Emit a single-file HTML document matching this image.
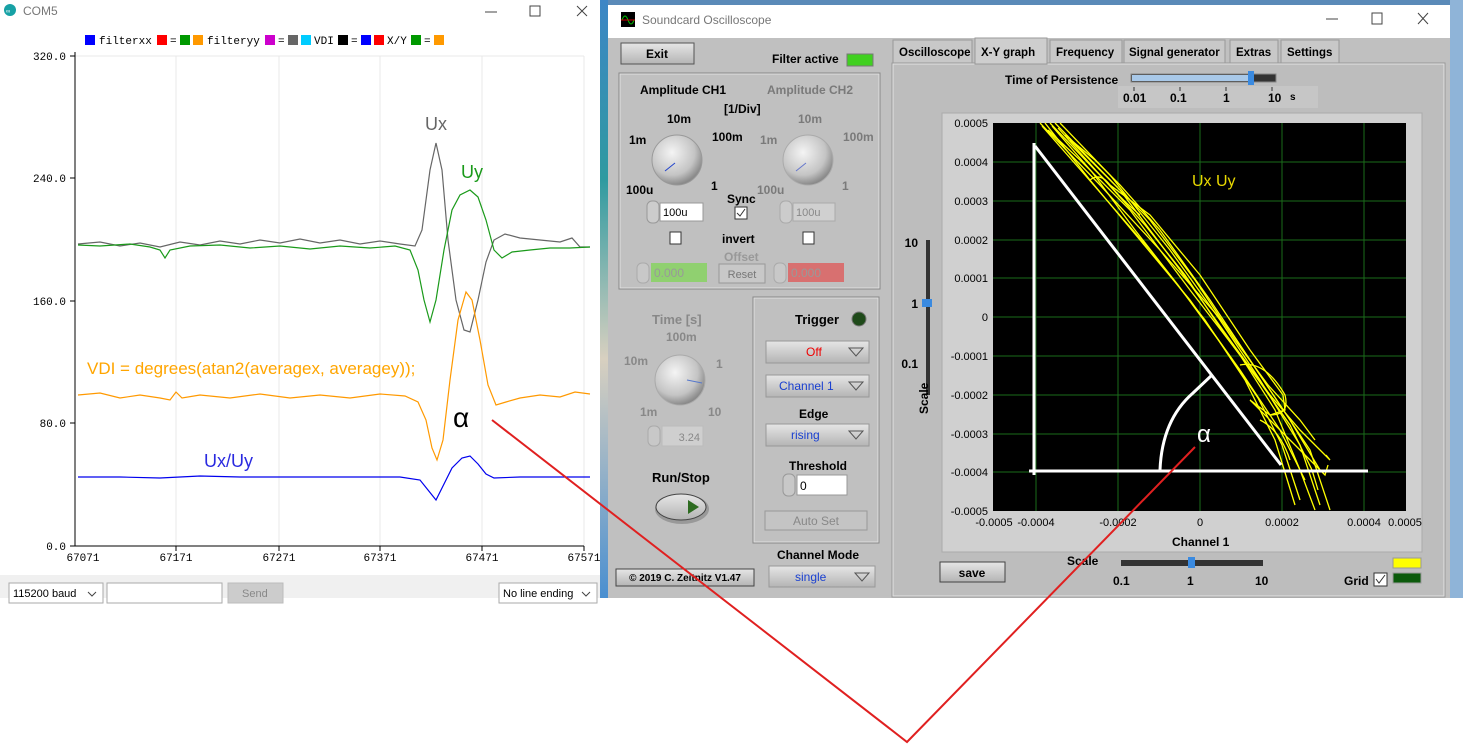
<!DOCTYPE html>
<html><head><meta charset="utf-8"><style>
html,body{margin:0;padding:0;background:#fff;width:1463px;height:749px;overflow:hidden}
svg{display:block}
text{font-family:"Liberation Sans",sans-serif}
.m{font-family:"Liberation Mono",monospace;font-size:11px;fill:#000}
.b{font-weight:bold;font-size:12px;fill:#000}
.g{font-weight:bold;font-size:12px;fill:#7a7a7a}
</style></head><body>
<svg width="1463" height="749" viewBox="0 0 1463 749" xmlns="http://www.w3.org/2000/svg">
<defs>
<radialGradient id="kn" cx="40%" cy="35%" r="65%"><stop offset="0" stop-color="#f4f4f4"/><stop offset="0.7" stop-color="#c4c4c4"/><stop offset="1" stop-color="#8a8a8a"/></radialGradient>
<linearGradient id="btn" x1="0" y1="0" x2="0" y2="1"><stop offset="0" stop-color="#e6e6e6"/><stop offset="1" stop-color="#b4b4b4"/></linearGradient>
<linearGradient id="desk" x1="0" y1="0" x2="0" y2="1"><stop offset="0" stop-color="#3d86c6"/><stop offset="0.3" stop-color="#2f9aa0"/><stop offset="0.6" stop-color="#d8d0c0"/><stop offset="1" stop-color="#4a8fd0"/></linearGradient>
</defs>
<rect x="598" y="0" width="865" height="598" fill="url(#desk)"/>
<rect x="608" y="0" width="855" height="6" fill="#5a8ab8"/>
<rect x="1450" y="0" width="13" height="598" fill="#8fb4d8"/>
<!-- LEFT WINDOW -->
<rect x="0" y="0" width="600" height="598" fill="#fff"/>
<circle cx="10" cy="10" r="6" fill="#17a1a5"/><text x="6" y="13" font-size="6" fill="#fff">∞</text>
<text x="23" y="15" font-size="12" fill="#777">COM5</text>
<line x1="485" y1="12" x2="497" y2="12" stroke="#444"/>
<rect x="530" y="6" width="10" height="10" fill="none" stroke="#444"/>
<path d="M577 6 L587 16 M587 6 L577 16" stroke="#444"/>
<g>
<rect x="85" y="35" width="10" height="10" fill="#00f"/><text x="99" y="44" class="m">filterxx</text>
<rect x="157" y="35" width="10" height="10" fill="#f00"/><text x="170" y="44" class="m">=</text>
<rect x="180" y="35" width="10" height="10" fill="#090"/><rect x="193" y="35" width="10" height="10" fill="#f90"/>
<text x="207" y="44" class="m">filteryy</text>
<rect x="265" y="35" width="10" height="10" fill="#c0c"/><text x="278" y="44" class="m">=</text>
<rect x="288" y="35" width="10" height="10" fill="#666"/><rect x="301" y="35" width="10" height="10" fill="#0cf"/>
<text x="314" y="44" class="m">VDI</text>
<rect x="338" y="35" width="10" height="10" fill="#000"/><text x="351" y="44" class="m">=</text>
<rect x="361" y="35" width="10" height="10" fill="#00f"/><rect x="374" y="35" width="10" height="10" fill="#f00"/>
<text x="387" y="44" class="m">X/Y</text>
<rect x="411" y="35" width="10" height="10" fill="#090"/><text x="424" y="44" class="m">=</text>
<rect x="434" y="35" width="10" height="10" fill="#f90"/>
</g>
<g stroke="#e8e8e8">
<line x1="176" y1="56" x2="176" y2="546"/><line x1="279" y1="56" x2="279" y2="546"/><line x1="380" y1="56" x2="380" y2="546"/><line x1="482" y1="56" x2="482" y2="546"/><line x1="584" y1="56" x2="584" y2="546"/>
<line x1="75" y1="56" x2="584" y2="56"/>
</g>
<g stroke="#000">
<line x1="75" y1="52" x2="75" y2="546"/><line x1="70" y1="546" x2="584" y2="546"/>
<line x1="70" y1="56" x2="75" y2="56"/><line x1="70" y1="178" x2="75" y2="178"/><line x1="70" y1="301" x2="75" y2="301"/><line x1="70" y1="423" x2="75" y2="423"/>
<line x1="176" y1="546" x2="176" y2="551"/><line x1="279" y1="546" x2="279" y2="551"/><line x1="380" y1="546" x2="380" y2="551"/><line x1="482" y1="546" x2="482" y2="551"/><line x1="584" y1="546" x2="584" y2="551"/>
</g>
<g text-anchor="end"><text x="66" y="60" class="m">320.0</text><text x="66" y="182" class="m">240.0</text><text x="66" y="305" class="m">160.0</text><text x="66" y="427" class="m">80.0</text><text x="66" y="550" class="m">0.0</text></g>
<g text-anchor="middle"><text x="83" y="561" class="m">67071</text><text x="176" y="561" class="m">67171</text><text x="279" y="561" class="m">67271</text><text x="380" y="561" class="m">67371</text><text x="482" y="561" class="m">67471</text><text x="584" y="561" class="m">67571</text></g>
<polyline fill="none" stroke="#666" stroke-width="1.2" points="78,244 100,242 120,246 140,243 160,247 180,242 200,245 220,241 240,244 260,240 280,243 300,239 320,243 340,240 360,244 380,241 400,244 415,246 422,230 430,170 436,143 442,170 448,240 456,300 464,330 470,332 478,300 486,262 494,240 505,234 520,238 540,240 560,242 572,238 580,247 590,247"/>
<polyline fill="none" stroke="#1a9a1a" stroke-width="1.2" points="78,245 100,246 130,244 150,247 160,250 165,258 170,250 190,246 220,245 250,248 280,246 310,249 340,246 370,248 395,246 410,250 418,270 424,300 430,322 436,300 444,250 452,210 460,195 470,190 478,197 486,220 494,250 502,258 512,252 530,250 550,248 570,248 590,247"/>
<polyline fill="none" stroke="#ff9900" stroke-width="1.2" points="78,395 100,393 120,398 140,395 160,398 170,400 176,392 182,398 200,395 230,398 260,394 290,398 320,395 350,398 380,394 405,396 418,402 426,420 432,448 437,460 443,440 450,380 458,320 466,292 472,300 480,340 488,385 496,405 506,402 520,398 540,395 560,397 575,392 590,394"/>
<polyline fill="none" stroke="#0000ee" stroke-width="1.2" points="78,477 120,477 160,478 200,476 240,477 280,477 320,477 360,477 400,477 420,480 428,490 436,500 444,484 452,468 462,458 470,456 478,464 486,474 494,478 520,477 560,477 590,477"/>
<text x="425" y="130" font-size="18" fill="#666">Ux</text>
<text x="461" y="178" font-size="18" fill="#1a9a1a">Uy</text>
<text x="87" y="374" font-size="17" fill="#ffa500">VDI = degrees(atan2(averagex, averagey));</text>
<text x="453" y="427" font-size="28" fill="#000">α</text>
<text x="204" y="467" font-size="18" fill="#2a2ae0">Ux/Uy</text>
<rect x="0" y="575" width="600" height="23" fill="#f0f0f0"/>
<rect x="9" y="583" width="94" height="20" fill="#fff" stroke="#aaa"/><text x="13" y="597" font-size="11" fill="#000">115200 baud</text><path d="M88 592 l4 4 l4 -4" stroke="#444" fill="none"/>
<rect x="107" y="583" width="115" height="20" fill="#fff" stroke="#aaa"/>
<rect x="228" y="583" width="55" height="20" fill="#ccc" stroke="#bbb"/><text x="242" y="597" font-size="11" fill="#888">Send</text>
<rect x="499" y="583" width="98" height="20" fill="#fff" stroke="#aaa"/><text x="503" y="597" font-size="11" fill="#000">No line ending</text><path d="M582 592 l4 4 l4 -4" stroke="#444" fill="none"/>
<!-- RIGHT WINDOW -->
<rect x="608" y="5" width="842" height="593" fill="#c0c0c0"/>
<rect x="608" y="5" width="842" height="33" fill="#fff"/>
<rect x="621" y="12" width="14" height="15" fill="#000"/><path d="M622 20 q3 -8 6 0 t6 0" stroke="#0c0" fill="none"/><line x1="621" y1="20" x2="635" y2="20" stroke="#c00"/>
<text x="642" y="24" font-size="12" fill="#777">Soundcard Oscilloscope</text>
<line x1="1326" y1="19" x2="1338" y2="19" stroke="#444"/>
<rect x="1372" y="13" width="10" height="11" fill="none" stroke="#444"/>
<path d="M1418 13 L1428 24 M1428 13 L1418 24" stroke="#444"/>
<rect x="621" y="43" width="73" height="21" fill="url(#btn)" stroke="#555"/><text x="657" y="58" class="b" text-anchor="middle">Exit</text>
<text x="772" y="63" class="b">Filter active</text>
<rect x="847" y="54" width="26" height="12" fill="#40d020" stroke="#777"/>
<rect x="619" y="73" width="261" height="216" fill="none" stroke="#888"/><rect x="620" y="74" width="259" height="214" fill="none" stroke="#e0e0e0"/>
<text x="640" y="94" class="b">Amplitude CH1</text><text x="767" y="94" class="g">Amplitude CH2</text>
<text x="724" y="113" class="b">[1/Div]</text>
<g>
<circle cx="677" cy="160" r="25" fill="url(#kn)" stroke="#999"/><line x1="665" y1="171" x2="675" y2="163" stroke="#2244cc"/>
<text x="667" y="123" class="b">10m</text><text x="629" y="144" class="b">1m</text><text x="712" y="141" class="b">100m</text><text x="626" y="194" class="b">100u</text><text x="711" y="190" class="b">1</text>
<circle cx="808" cy="160" r="25" fill="url(#kn)" stroke="#aaa"/><line x1="796" y1="171" x2="806" y2="163" stroke="#6677cc"/>
<text x="798" y="123" class="g">10m</text><text x="760" y="144" class="g">1m</text><text x="843" y="141" class="g">100m</text><text x="757" y="194" class="g">100u</text><text x="842" y="190" class="g">1</text>
</g>
<rect x="647" y="201" width="12" height="22" rx="5" fill="#ccc" stroke="#999"/>
<rect x="660" y="203" width="43" height="18" fill="#fff" stroke="#999"/><text x="663" y="216" font-size="11" fill="#000">100u</text>
<rect x="780" y="201" width="12" height="22" rx="5" fill="#ccc" stroke="#aaa"/>
<rect x="793" y="203" width="42" height="18" fill="#d0d0d0" stroke="#aaa"/><text x="796" y="216" font-size="11" fill="#888">100u</text>
<text x="727" y="203" class="b">Sync</text>
<rect x="735" y="207" width="12" height="12" fill="#fff" stroke="#333"/><path d="M737 213 l3 3 l5 -7" stroke="#333" fill="none"/>
<rect x="670" y="232" width="11" height="12" fill="#fff" stroke="#333"/><rect x="803" y="232" width="11" height="12" fill="#fff" stroke="#333"/>
<text x="722" y="243" class="b">invert</text>
<text x="724" y="261" class="g" style="fill:#999">Offset</text>
<rect x="637" y="263" width="12" height="20" rx="5" fill="#c8c8c8" stroke="#aaa"/>
<rect x="651" y="263" width="56" height="19" fill="#90d070"/><text x="654" y="277" font-size="12" fill="#999">0.000</text>
<rect x="719" y="264" width="46" height="19" fill="#c8c8c8" stroke="#999"/><text x="742" y="278" font-size="11" fill="#777" text-anchor="middle">Reset</text>
<rect x="774" y="263" width="12" height="20" rx="5" fill="#c8c8c8" stroke="#aaa"/>
<rect x="788" y="263" width="56" height="19" fill="#d87070"/><text x="791" y="277" font-size="12" fill="#999">0.000</text>
<text x="652" y="324" class="g" style="fill:#888;font-size:13px">Time [s]</text>
<text x="666" y="341" class="g" style="fill:#888">100m</text><text x="624" y="365" class="g" style="fill:#888">10m</text><text x="716" y="368" class="g" style="fill:#888">1</text><text x="640" y="416" class="g" style="fill:#888">1m</text><text x="708" y="416" class="g" style="fill:#888">10</text>
<circle cx="680" cy="380" r="25" fill="url(#kn)" stroke="#aaa"/><line x1="687" y1="380" x2="702" y2="383" stroke="#5577cc"/>
<rect x="648" y="426" width="12" height="20" rx="5" fill="#c8c8c8" stroke="#aaa"/>
<rect x="662" y="426" width="41" height="20" fill="#cfcfcf" stroke="#bbb"/><text x="700" y="441" font-size="11" fill="#888" text-anchor="end">3.24</text>
<text x="652" y="482" class="b" style="font-size:13px">Run/Stop</text>
<ellipse cx="682" cy="509" rx="27" ry="15" fill="#999"/><ellipse cx="681" cy="507" rx="25" ry="13" fill="url(#btn)" stroke="#444"/>
<path d="M688 500 L699 507 L688 514 Z" fill="#2d6b20"/>
<rect x="753" y="297" width="126" height="246" fill="none" stroke="#888"/><rect x="754" y="298" width="124" height="244" fill="none" stroke="#e0e0e0"/>
<text x="795" y="324" class="b" style="font-size:13px">Trigger</text>
<circle cx="859" cy="319" r="7" fill="#1f4a1a" stroke="#777"/>
<g font-size="12">
<rect x="766" y="341" width="103" height="22" fill="url(#btn)" stroke="#999"/><text x="806" y="356" fill="#e00">Off</text><path d="M849 348 l7 8 l7 -8 z" fill="none" stroke="#555"/>
<rect x="766" y="375" width="103" height="22" fill="url(#btn)" stroke="#999"/><text x="779" y="390" fill="#1a40d0">Channel 1</text><path d="M849 382 l7 8 l7 -8 z" fill="none" stroke="#555"/>
<text x="799" y="418" class="b">Edge</text>
<rect x="766" y="424" width="103" height="22" fill="url(#btn)" stroke="#999"/><text x="791" y="439" fill="#1a40d0">rising</text><path d="M849 431 l7 8 l7 -8 z" fill="none" stroke="#555"/>
</g>
<text x="789" y="470" class="b">Threshold</text>
<rect x="783" y="474" width="12" height="22" rx="5" fill="#c8c8c8" stroke="#999"/>
<rect x="797" y="475" width="50" height="20" fill="#fff" stroke="#999"/><text x="800" y="490" font-size="12" fill="#000">0</text>
<rect x="765" y="511" width="102" height="19" fill="#c4c4c4" stroke="#999"/><text x="816" y="525" font-size="12" fill="#888" text-anchor="middle">Auto Set</text>
<text x="777" y="559" class="b">Channel Mode</text>
<rect x="769" y="566" width="106" height="21" fill="url(#btn)" stroke="#999"/><text x="795" y="581" font-size="12" fill="#1a40d0">single</text><path d="M855 573 l7 8 l7 -8 z" fill="none" stroke="#555"/>
<rect x="616" y="569" width="138" height="17" fill="url(#btn)" stroke="#444"/><text x="685" y="581" font-size="10" font-weight="bold" fill="#000" text-anchor="middle">© 2019  C. Zeitnitz V1.47</text>
<rect x="892" y="63" width="553" height="534" fill="#bdbdbd" stroke="#999"/>
<rect x="893" y="64" width="551" height="532" fill="none" stroke="#e2e2e2"/>
<g font-size="11.5" font-weight="bold">
<rect x="893" y="40" width="79" height="23" fill="#c8c8c8" stroke="#999"/><text x="899" y="56">Oscilloscope</text>
<rect x="975" y="38" width="72" height="26" fill="#cecece" stroke="#999"/><text x="981" y="56">X-Y graph</text>
<rect x="1050" y="40" width="72" height="23" fill="#c8c8c8" stroke="#999"/><text x="1056" y="56">Frequency</text>
<rect x="1124" y="40" width="101" height="23" fill="#c8c8c8" stroke="#999"/><text x="1129" y="56">Signal generator</text>
<rect x="1230" y="40" width="48" height="23" fill="#c8c8c8" stroke="#999"/><text x="1236" y="56">Extras</text>
<rect x="1281" y="40" width="58" height="23" fill="#c8c8c8" stroke="#999"/><text x="1287" y="56">Settings</text>
</g>
<text x="1005" y="84" class="b">Time of Persistence</text>
<rect x="1118" y="86" width="200" height="22" fill="#c6c6c6"/>
<rect x="1131" y="74" width="145" height="8" fill="#333" stroke="#888"/><rect x="1132" y="75" width="118" height="6" fill="#a8c8e8"/><rect x="1248" y="71" width="6" height="14" fill="#3a8ae0"/>
<g stroke="#333"><line x1="1134" y1="87" x2="1134" y2="91"/><line x1="1180" y1="87" x2="1180" y2="91"/><line x1="1226" y1="87" x2="1226" y2="91"/><line x1="1272" y1="87" x2="1272" y2="91"/></g>
<text x="1123" y="102" class="b">0.01</text><text x="1170" y="102" class="b">0.1</text><text x="1223" y="102" class="b">1</text><text x="1268" y="102" class="b">10</text><text x="1290" y="100" font-size="10" font-weight="bold">s</text>
<rect x="942" y="113" width="480" height="439" fill="#d0d0d0" stroke="#aaa"/>
<rect x="993" y="123" width="413" height="388" fill="#000"/>
<g stroke="#1a6b1a">
<line x1="1036" y1="123" x2="1036" y2="511"/><line x1="1118" y1="123" x2="1118" y2="511"/><line x1="1200" y1="123" x2="1200" y2="511"/><line x1="1282" y1="123" x2="1282" y2="511"/><line x1="1364" y1="123" x2="1364" y2="511"/>
<line x1="993" y1="162" x2="1406" y2="162"/><line x1="993" y1="201" x2="1406" y2="201"/><line x1="993" y1="240" x2="1406" y2="240"/><line x1="993" y1="278" x2="1406" y2="278"/><line x1="993" y1="317" x2="1406" y2="317"/><line x1="993" y1="356" x2="1406" y2="356"/><line x1="993" y1="395" x2="1406" y2="395"/><line x1="993" y1="434" x2="1406" y2="434"/><line x1="993" y1="472" x2="1406" y2="472"/>
</g>
<g font-size="11" fill="#000" text-anchor="end">
<text x="988" y="127">0.0005</text><text x="988" y="166">0.0004</text><text x="988" y="205">0.0003</text><text x="988" y="244">0.0002</text><text x="988" y="282">0.0001</text><text x="988" y="321">0</text><text x="988" y="360">-0.0001</text><text x="988" y="399">-0.0002</text><text x="988" y="438">-0.0003</text><text x="988" y="476">-0.0004</text><text x="988" y="515">-0.0005</text>
</g>
<g font-size="11" fill="#000" text-anchor="middle">
<text x="994" y="526">-0.0005</text><text x="1036" y="526">-0.0004</text><text x="1118" y="526">-0.0002</text><text x="1200" y="526">0</text><text x="1282" y="526">0.0002</text><text x="1364" y="526">0.0004</text><text x="1405" y="526">0.0005</text>
</g>
<text x="1172" y="546" class="b">Channel 1</text>
<g fill="none" stroke="#ffff00" stroke-width="1.3">
<polyline points="1040,123 1100,185 1160,250 1230,330 1270,390 1310,450 1330,510"/>
<polyline points="1050,123 1095,170 1110,185 1150,215 1200,275 1250,350 1283,395 1285,410 1270,415 1250,400 1290,440 1325,475 1328,465"/>
<polyline points="1060,123 1110,175 1170,250 1220,320 1260,380 1300,445 1320,505"/>
<polyline points="1045,123 1090,180 1140,240 1190,300 1240,370 1280,430 1305,480"/>
<polyline points="1055,123 1120,190 1180,270 1230,340 1270,395 1300,430 1330,460 1326,455"/>
<polyline points="1048,130 1080,160 1100,180 1130,210 1190,290 1240,355 1275,410 1300,470 1315,510"/>
<polyline points="1065,135 1095,160 1120,185 1160,230 1210,300 1250,360 1290,420 1320,470"/>
<polyline points="1042,126 1085,175 1150,250 1205,320 1245,380 1275,440 1295,505"/>
<polyline points="1058,128 1100,175 1145,225 1185,275 1225,335 1262,385 1290,425 1312,470 1318,490"/>
<polyline points="1070,140 1110,180 1150,220 1195,280 1235,340 1268,385 1300,420 1315,440"/>
<polyline points="1052,126 1092,172 1135,230 1178,285 1222,345 1258,398 1282,445 1300,500"/>
<path d="M1090 180 q10 -8 20 5 t30 30 M1240 365 q25 -5 45 30 q5 20 -15 20 M1260 420 q20 10 30 40"/>
</g>
<text x="1192" y="186" font-size="16" fill="#e8d800">Ux Uy</text>
<g stroke="#fff" stroke-width="3" fill="none">
<line x1="1034" y1="143" x2="1034" y2="475"/>
<line x1="1029" y1="471" x2="1368" y2="471"/>
<line x1="1035" y1="146" x2="1281" y2="465"/>
<path d="M1212 375 L1193 393 Q1162 420 1160 470"/>
</g>
<text x="1197" y="442" font-size="24" fill="#fff">α</text>
<rect x="926" y="240" width="4" height="155" fill="#333"/><rect x="922" y="299" width="10" height="8" fill="#3a8ae0"/>
<text x="918" y="247" class="b" text-anchor="end">10</text><text x="918" y="308" class="b" text-anchor="end">1</text><text x="918" y="368" class="b" text-anchor="end">0.1</text>
<text x="928" y="414" class="b" transform="rotate(-90 928 414)">Scale</text>
<rect x="940" y="562" width="65" height="20" fill="url(#btn)" stroke="#444"/><text x="972" y="577" class="b" text-anchor="middle">save</text>
<text x="1067" y="565" class="b">Scale</text>
<rect x="1121" y="560" width="142" height="6" fill="#333"/><rect x="1188" y="557" width="7" height="11" fill="#3a8ae0"/>
<text x="1113" y="585" class="b">0.1</text><text x="1187" y="585" class="b">1</text><text x="1255" y="585" class="b">10</text>
<text x="1344" y="585" class="b">Grid</text>
<rect x="1374" y="573" width="13" height="13" fill="#fff" stroke="#333"/><path d="M1376 579 l3 4 l6 -8" stroke="#333" fill="none"/>
<rect x="1393" y="558" width="28" height="10" fill="#ffff00" stroke="#999"/><rect x="1393" y="573" width="28" height="10" fill="#0b5a0b" stroke="#999"/>
<polyline points="492,420 907,742 1195,447" fill="none" stroke="#e02020" stroke-width="2"/>
</svg>
</body></html>
